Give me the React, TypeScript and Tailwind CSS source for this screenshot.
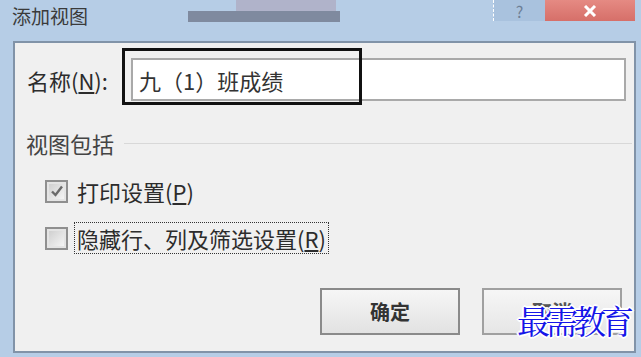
const font = { fontFamily: '"Noto Sans CJK SC", "Liberation Sans", sans-serif' }

const Check = ({ checked }: { checked: boolean }) => (
  <div className="flex h-[23px] w-[23px] items-center justify-center border-2 border-[#8f8f8f] bg-[#e4e4e4]">
    <div className="flex h-[15px] w-[15px] items-center justify-center bg-gradient-to-br from-[#d0d0d0] to-[#f4f4f4]">
      {checked && (
        <svg width="14" height="14" viewBox="0 0 14 14">
          <path d="M2 7.5 L5.5 11 L12 2.5" fill="none" stroke="#6a6a6a" strokeWidth="2.4" />
        </svg>
      )}
    </div>
  </div>
)

export default function App() {
  return (
    <div
      className="relative flex h-[357px] w-[641px] flex-col overflow-hidden bg-[#b6cde6] text-[#2c2c2c]"
      style={font}
    >
      {/* title bar */}
      <div className="flex h-[41px] shrink-0 items-start">
        <div className="pl-[12px] pt-[2px] text-[19px] leading-[28px] text-[#3a3a3a]">添加视图</div>
        <div className="ml-[100px] flex flex-col">
          <div className="ml-[48px] h-[11px] w-[100px] bg-[#b0b3ca]" />
          <div className="h-[11px] w-[152px] bg-[#7f8a9f]" />
        </div>
        <div className="ml-auto flex h-[21px]">
          <div className="flex w-[52px] items-center justify-center border-l border-dashed border-white bg-[#a9c2de] text-[16px] leading-none text-[#6d7f96]">
            ?
          </div>
          <div className="mr-[6px] flex w-[90px] items-center justify-center bg-gradient-to-b from-[#e58a83] to-[#d66f69]">
            <svg width="14" height="12" viewBox="0 0 14 12">
              <path d="M2 1 L12 11 M12 1 L2 11" stroke="#fff" strokeWidth="3" />
            </svg>
          </div>
        </div>
      </div>

      {/* client area */}
      <div className="ml-[13px] mr-[5px] flex h-[312px] flex-col border-2 border-[#8193a8] bg-[#f0f0f0]">
        <div className="relative flex h-[58px] items-end pl-[12px]">
          <div className="flex h-[43px] w-[104px] items-center text-[22px] leading-none">
            名称(<span className="underline underline-offset-2">N</span>):
          </div>
          <div className="mr-[8px] flex h-[43px] flex-1 items-center border-2 border-[#a9a9a9] bg-white pl-[6px] text-[22px] leading-none text-[#333]">
            九（1）班成绩
          </div>
          <div className="absolute left-[107px] top-[5px] h-[57px] w-[240px] border-[3px] border-[#111]" />
        </div>

        <div className="mt-[30px] flex h-[24px] items-center pl-[11px]">
          <span className="text-[22px] leading-none text-[#444]">视图包括</span>
          <div className="ml-[10px] mr-[2px] h-px flex-1 bg-[#d8d8d8]" />
        </div>

        <div className="mt-[22px] flex h-[28px] items-center pl-[30px]">
          <Check checked />
          <span className="ml-[9px] text-[22px] leading-none">
            打印设置(<span className="underline underline-offset-2">P</span>)
          </span>
        </div>

        <div className="mt-[17px] flex h-[32px] items-center pl-[30px]">
          <Check checked={false} />
          <span className="ml-[6px] border border-dotted border-[#333] px-[2px] py-[4px] text-[22px] leading-none">
            隐藏行、列及筛选设置(<span className="underline underline-offset-2">R</span>)
          </span>
        </div>

        <div className="mt-[34px] flex gap-[22px] pl-[305px]">
          <div className="flex h-[47px] w-[140px] items-center justify-center border-2 border-[#8a8a8a] bg-gradient-to-b from-[#f6f6f6] to-[#e2e2e2] text-[20px] font-bold leading-none text-[#333]">
            确定
          </div>
          <div className="flex h-[47px] w-[140px] items-center justify-center border-2 border-[#a0a0a0] bg-gradient-to-b from-[#f6f6f6] to-[#e6e6e6] text-[20px] font-bold leading-none text-[#555]">
            取消
          </div>
        </div>
      </div>

      {/* watermark */}
      <div
        className="absolute left-[517px] top-[303px] text-[33px] leading-none tracking-[-5px] text-[#1515e8]"
        style={{
          fontFamily: '"Noto Serif CJK SC", "Noto Sans CJK SC", serif',
          textShadow: '2px 0 #fff, -2px 0 #fff, 0 2px #fff, 0 -2px #fff, 1px 1px #fff, -1px -1px #fff, 1px -1px #fff, -1px 1px #fff',
        }}
      >
        最需教育
      </div>
    </div>
  )
}
